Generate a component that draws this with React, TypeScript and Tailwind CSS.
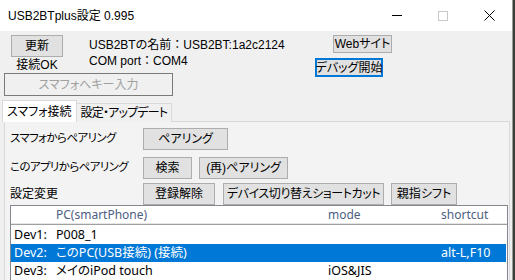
import React from "react";

const jp = {
  fontFamily: '"Liberation Sans", "Noto Sans CJK JP", sans-serif',
  fontFeatureSettings: '"palt"',
};
const ui = { fontFamily: '"Noto Sans", "Noto Sans CJK JP", sans-serif' };
const noPalt = { fontFeatureSettings: "normal" };

function Btn({
  children,
  className = "",
  focused = false,
}: {
  children: React.ReactNode;
  className?: string;
  focused?: boolean;
}) {
  return (
    <div
      className={`flex items-center justify-center whitespace-nowrap bg-[#e1e1e1] text-[12px] leading-none text-black ${
        focused ? "border-2 border-[#0078d7]" : "border border-[#adadad]"
      } ${className}`}
    >
      {children}
    </div>
  );
}

function Label({ children }: { children: React.ReactNode }) {
  return <span className="w-[133px] shrink-0 text-[11.5px] tracking-[-0.6px] leading-none">{children}</span>;
}

const rows = [
  { id: "Dev1:", name: "P008_1", mode: "", sc: "" },
  { id: "Dev2:", name: "このPC(USB接続) (接続)", mode: "", sc: "alt-L,F10", sel: true },
  { id: "Dev3:", name: "メイのiPod touch", mode: "iOS&JIS", sc: "" },
];

export default function App() {
  return (
    <div className="flex w-[515px] h-[280px] overflow-hidden bg-[#3a3f3a] whitespace-nowrap" style={jp}>
      <div className="flex flex-col w-[513px] h-full bg-[#f0f0f0] border-r border-[#9a9a9a]">
        {/* title bar */}
        <div className="flex items-center h-[31px] bg-white shrink-0">
          <span className="pl-[8px] text-[12px] text-black">USB2BTplus設定 0.995</span>
          <div className="ml-auto flex h-full">
            <div className="flex w-[46px] items-center justify-center">
              <div className="w-[10px] h-px bg-black" />
            </div>
            <div className="flex w-[46px] items-center justify-center">
              <div className="w-[10px] h-[10px] border border-[#c8c8c8]" />
            </div>
            <div className="flex w-[46px] items-center justify-center">
              <svg width="11" height="11" viewBox="0 0 11 11">
                <path d="M0.5 0.5L10.5 10.5M10.5 0.5L0.5 10.5" stroke="#000" strokeWidth="1" />
              </svg>
            </div>
          </div>
        </div>

        {/* top area */}
        <div className="flex h-[69px] shrink-0">
          <div className="flex flex-col pl-[4px] pt-[4px] w-[89px] shrink-0">
            <div className="flex flex-col items-start pl-[7px]">
              <Btn className="w-[52px] h-[22px]">更新</Btn>
              <span className="w-[52px] text-center text-[12px] leading-[12px] mt-[2px]">接続OK</span>
            </div>
            <div className="mt-[2px] flex items-center justify-center h-[23px] w-[169px] shrink-0 bg-[#f0f0f0] border border-[#7a7a7a] text-[12px] leading-none text-[#a0a0a0]">
              スマフォへキー入力
            </div>
          </div>
          <div className="flex flex-col pt-[6px] text-[12px] leading-[16px] w-[226px] shrink-0">
            <span>
              USB2BTの名前<span style={noPalt}>：</span>USB2BT:1a2c2124
            </span>
            <span>
              COM port<span style={noPalt}>：</span>COM4
            </span>
          </div>
          <div className="flex flex-col items-start pt-[4px]">
            <Btn className="w-[59px] h-[18px] ml-[18px]">Webサイト</Btn>
            <Btn focused className="w-[68px] h-[19px] mt-[5px]">デバッグ開始</Btn>
          </div>
        </div>

        {/* tabs */}
        <div className="flex items-end h-[22px] pl-[2px] shrink-0 relative z-10">
          <div className="flex items-center h-[22px] px-[4px] bg-white border border-b-0 border-[#d9d9d9] text-[12px] leading-none">
            スマフォ接続
          </div>
          <div className="flex items-center h-[19px] px-[4px] bg-[#f0f0f0] border border-l-0 border-b-0 border-[#d9d9d9] text-[12px] tracking-[-0.8px] leading-none">
            設定・アップデート
          </div>
        </div>

        <div className="flex flex-col flex-1 ml-[4px] mr-[2px] mt-[-1px] border border-[#d9d9d9] bg-[#f3f3f3] pl-[5px] pt-[6px]">
          <div className="flex items-center h-[22px]">
            <Label>スマフォからペアリング</Label>
            <Btn className="w-[85px] h-[22px]">ペアリング</Btn>
          </div>
          <div className="flex items-center h-[22px] mt-[7px]">
            <Label>このアプリからペアリング</Label>
            <Btn className="w-[49px] h-[22px]">検索</Btn>
            <Btn className="w-[89px] h-[22px] ml-[7px]">(再)ペアリング</Btn>
          </div>
          <div className="flex items-center h-[22px] mt-[4px]">
            <span className="w-[133px] shrink-0 text-[12px] leading-none">設定変更</span>
            <Btn className="w-[72px] h-[22px]">登録解除</Btn>
            <Btn className="w-[161px] h-[22px] ml-[8px] tracking-[-0.4px]">デバイス切り替えショートカット</Btn>
            <Btn className="w-[66px] h-[22px] ml-[7px]">親指シフト</Btn>
          </div>

          {/* list */}
          <div className="flex flex-col flex-1 mr-[1px] bg-white border border-[#828790] border-b-0" style={ui}>
            <div className="flex items-center h-[18px] border-b border-[#e5e5e5] text-[12px] text-[#4d6082]">
              <span className="w-[45px] shrink-0" />
              <span className="w-[272px] shrink-0">PC(smartPhone)</span>
              <span className="w-[113px] shrink-0">mode</span>
              <span>shortcut</span>
            </div>
            <div className="h-px bg-[#a0a0a0]" />
            <div className="flex flex-col pt-[1px]">
              {rows.map((r) => (
                <div
                  key={r.id}
                  className={`flex items-center h-[18px] mr-[1px] text-[12.5px] ${
                    r.sel ? "bg-[#0078d7] text-white" : "text-black"
                  }`}
                >
                  <span className="w-[45px] shrink-0 pl-[3px]">{r.id}</span>
                  <span className="w-[272px] shrink-0" style={{ fontFeatureSettings: '"palt"' }}>
                    {r.name}
                  </span>
                  <span className="w-[113px] shrink-0">{r.mode}</span>
                  <span>{r.sc}</span>
                </div>
              ))}
            </div>
          </div>
        </div>
      </div>
    </div>
  );
}
